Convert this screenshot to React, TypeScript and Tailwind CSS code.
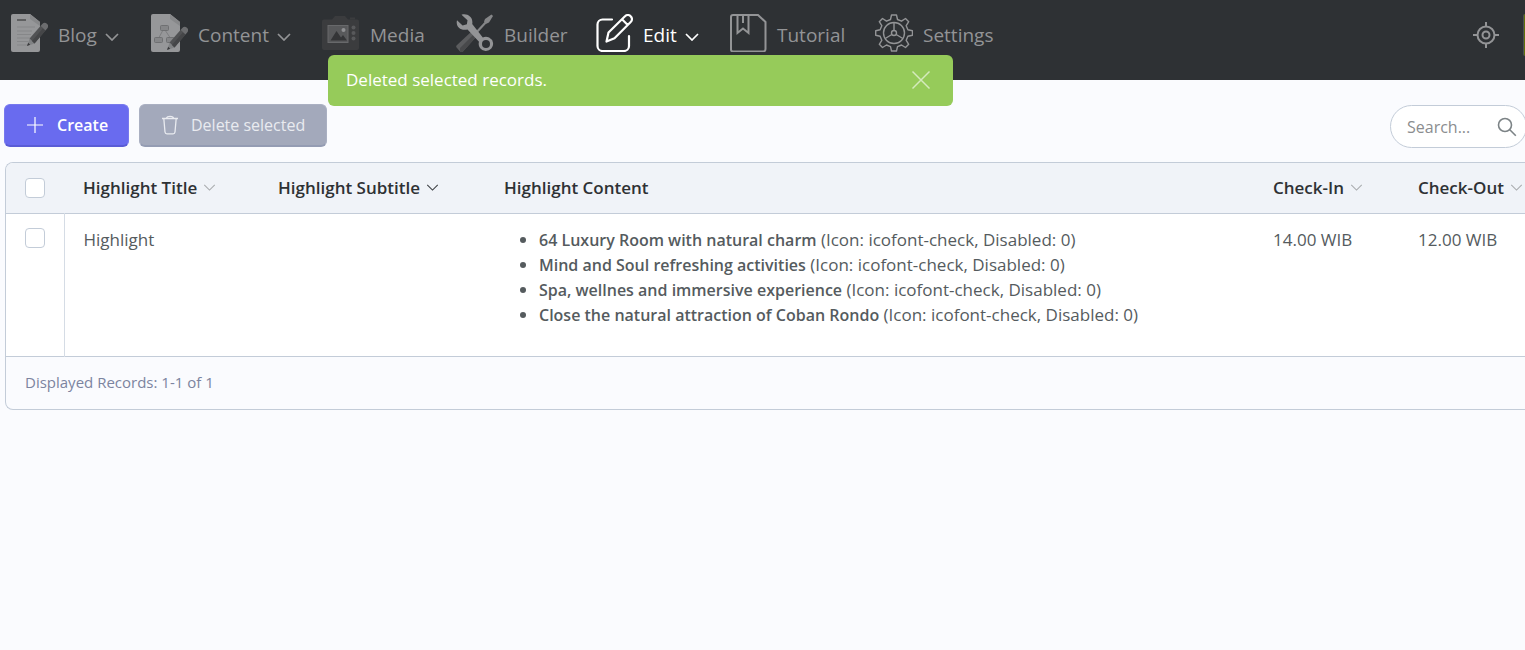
import React from "react";

function Pencil() {
  return (
    <g>
      <path d="M17 32l2.600-7.400 5 5z" fill="#808284" />
      <path d="M17 32l1.200-3.200 2 2z" fill="#38393b" />
      <path d="M19.600 24.600L30.500 12l5 4.400-11 13z" fill="#515254" />
      <path d="M22 27L33 14.200l2.500 2.200-11 13z" fill="#454648" />
      <path d="M30.500 12l1.800-2a3.200 3.200 0 0 1 4.900 4.400l-1.700 2z" fill="#6c6d6f" />
    </g>
  );
}

function Sheet() {
  return (
    <>
      <path d="M3 0h17l10 8v28a2 2 0 0 1-2 2H3a2 2 0 0 1-2-2V2a2 2 0 0 1 2-2z" fill="#969799" />
      <path d="M20 0l10 8v4L20 5z" fill="#87888a" />
    </>
  );
}

const blogIcon = (
  <svg viewBox="0 0 38 38" className="size-[38px] shrink-0" aria-hidden="true">
    <Sheet />
    <path d="M7 6h9" stroke="#515254" strokeWidth="1.6" />
    <path d="M7 13h18M7 17h15M7 20.500h14M7 24h13M7 27.500h11M7 31h11" stroke="#868789" strokeWidth="1.100" />
    <Pencil />
  </svg>
);

const contentIcon = (
  <svg viewBox="0 0 38 38" className="size-[38px] shrink-0" aria-hidden="true">
    <Sheet />
    <path d="M13 16l-4 7.500M15 16l5 7.500" stroke="#7c7d7f" fill="none" />
    <g fill="#858688" stroke="#6f7072">
      <rect x="10.500" y="11.500" width="8" height="5" rx="1" />
      <rect x="4.500" y="23.500" width="8" height="5" rx="1" />
      <rect x="16.500" y="23.500" width="8" height="5" rx="1" />
    </g>
    <g transform="translate(0 4)"><Pencil /></g>
  </svg>
);

const mediaIcon = (
  <svg viewBox="0 0 38 38" className="size-[38px] shrink-0" aria-hidden="true">
    <path d="M2 5.500h8L13 2h10l3 3.500h9a2 2 0 0 1 2 2V34a2 2 0 0 1-2 2H2a2 2 0 0 1-2-2V7.500a2 2 0 0 1 2-2z" fill="#3b3c3e" />
    <path d="M28 4.500h5" stroke="#3b3c3e" strokeWidth="2" />
    <rect x="6" y="11.500" width="20" height="17" fill="#58595b" stroke="#68696b" />
    <path d="M8.500 26.500l6-9.500 4.500 6.500 2-2.500 4 5.500z" fill="#343537" />
    <circle cx="21.500" cy="16" r="2" fill="#909193" />
    <g fill="#58595b"><circle cx="31.500" cy="13.500" r="2" /><circle cx="31.500" cy="19" r="2" /><circle cx="31.500" cy="24.500" r="2" /></g>
  </svg>
);

const builderIcon = (
  <svg viewBox="0 0 38 38" className="size-[38px] shrink-0" aria-hidden="true">
    <path d="M19 20L31 7" stroke="#858688" strokeWidth="2.200" />
    <path d="M28 7.500l1-2.500 6.500-4.500 1.500 1.500-4 6.500-2.700 1.300z" fill="#858688" />
    <path d="M1 31l14.500-13.500 5 5L7 37.500a2 2 0 0 1-3 0l-3-3.500a2 2 0 0 1 0-3z" fill="#5b5c5e" />
    <path d="M4 34l14-14 2.500 2.500L7 37.500a2 2 0 0 1-3 0z" fill="#48494b" />
    <path d="M5.500.800C11-1.200 17.600 3 16.200 10l10.600 13.400a7.200 7.200 0 1 1-3.800 4.400L11.500 15.400C5 17.400-.700 12.500 1 6.200l5.600 5.200 4.300-1.200.600-4z" fill="#939496" />
    <circle cx="30" cy="30" r="4" fill="#2e3134" />
  </svg>
);

const editIcon = (
  <svg viewBox="0 0 38 38" className="size-[38px] shrink-0" fill="none" stroke="currentColor" strokeWidth="2.200" strokeLinejoin="round" strokeLinecap="round" aria-hidden="true">
    <path d="M17 5.500H7.500A5 5 0 0 0 2.500 10.500V32a5 5 0 0 0 5 5H29a5 5 0 0 0 5-5V22" />
    <path d="M11.500 27.500l2-9L30 2.300a3.800 3.800 0 0 1 5.700 0 3.800 3.800 0 0 1 0 5.700L19.500 24.200zM27 5.300l5.700 5.700" />
  </svg>
);

const tutorialIcon = (
  <svg viewBox="0 0 38 38" className="size-[38px] shrink-0" fill="none" stroke="currentColor" strokeWidth="2" aria-hidden="true">
    <path d="M4 1h25l7.500 7v27A2.500 2.500 0 0 1 34 37.500H4A2 2 0 0 1 2 35.500V3a2 2 0 0 1 2-2z" />
    <path d="M8.500 1v18l5.500-4.500 5.500 4.500V1M14 1v8" />
  </svg>
);

const settingsIcon = (
  <svg viewBox="0 0 38 38" className="size-[38px] shrink-0" fill="none" stroke="currentColor" strokeWidth="1.400" strokeLinejoin="round" aria-hidden="true">
    <path d="M16.500 1h5l1 4.500 4 1.700 4-2.700 3.200 3.200-2.500 4 1.700 4 4.600 1v4.600l-4.600 1-1.700 4 2.500 4-3.200 3.200-4-2.500-4 1.700-1 4.300h-5l-1-4.300-4-1.700-4 2.500-3.200-3.200 2.500-4-1.700-4L.700 21.300v-4.600l4.400-1 1.700-4-2.500-4 3.200-3.200 4 2.700 4-1.700z" />
    <circle cx="19" cy="19" r="10.500" />
    <circle cx="19" cy="19" r="2.500" />
    <path d="M19 8.500v8M16.800 20.500l-6.600 4M21.200 20.500l6.600 4" />
  </svg>
);

function Chevron({ className }: { className: string }) {
  return (
    <svg viewBox="0 0 14 8" className={className} fill="none" stroke="currentColor" aria-hidden="true">
      <path d="M1 1l6 6 6-6" />
    </svg>
  );
}

const navItems = [
  { label: "Blog", icon: blogIcon, menu: true, width: "w-[140px]" },
  { label: "Content", icon: contentIcon, menu: true, width: "w-[172px]" },
  { label: "Media", icon: mediaIcon, menu: false, width: "w-[134px]" },
  { label: "Builder", icon: builderIcon, menu: false, width: "w-[139px]" },
  { label: "Edit", icon: editIcon, menu: true, width: "w-[134px]" },
  { label: "Tutorial", icon: tutorialIcon, menu: false, width: "w-[146px]" },
  { label: "Settings", icon: settingsIcon, menu: false, width: "w-[130px]" },
];

const columns = [
  { label: "Highlight Title", sort: "text-[#a9abae]", width: "w-[195px]" },
  { label: "Highlight Subtitle", sort: "text-[#3c3f43]", width: "w-[226px]" },
  { label: "Highlight Content", sort: "", width: "" },
  { label: "Check-In", sort: "text-[#a9abae]", width: "w-[145px]" },
  { label: "Check-Out", sort: "text-[#a9abae]", width: "w-[126px]" },
];

const highlights = [
  "64 Luxury Room with natural charm",
  "Mind and Soul refreshing activities",
  "Spa, wellnes and immersive experience",
  "Close the natural attraction of Coban Rondo",
];

const checkbox =
  "block size-5 appearance-none rounded-[4px] border border-[#c3ccd8] bg-white checked:bg-[#696bef]";

export default function App() {
  return (
    <div className="relative min-h-screen overflow-x-hidden bg-[#fafbfe] font-['Open_Sans','Noto_Sans',sans-serif] text-base text-[#555b5e]">
      <header className="flex h-20 items-start justify-between bg-[#2e3134] text-[#939496]">
        <nav className="flex pt-3.5 pl-2.5" aria-label="Main">
          {navItems.map((item) => (
            <a
              key={item.label}
              href="#"
              className={`flex shrink-0 items-center whitespace-nowrap ${item.width} ${item.label === "Edit" ? "text-white" : ""}`}
            >
              {item.icon}
              <span className="mt-1 ml-2.5 text-[19px] leading-6">{item.label}</span>
              {item.menu && <Chevron className="mt-2 ml-2 h-2 w-3.5 stroke-[1.700]" />}
            </a>
          ))}
        </nav>
        <div className="flex items-start pt-3.5">
          <button type="button" aria-label="Locate" className="mt-2">
            <svg viewBox="0 0 26 26" className="size-[26px]" fill="none" stroke="currentColor" strokeWidth="2" aria-hidden="true">
              <circle cx="13" cy="13" r="8.500" />
              <circle cx="13" cy="13" r="3.500" />
              <path d="M13 0v5M13 21v5M0 13h5M21 13h5" />
            </svg>
          </button>
          <span className="ml-6 h-[42px] w-0.5 rounded-l-sm border-l border-[#4c5052] bg-[#5f7009]" />
        </div>
      </header>

      <div role="status" className="absolute top-[55px] left-[328px] flex h-[51px] w-[625px] items-center justify-between rounded-md bg-[#96cb5a] pr-[22px] pb-0.5 pl-[18px] text-[17px] text-white">
        <span>Deleted selected records.</span>
        <button type="button" aria-label="Close" className="text-[#d5eabd]">
          <svg viewBox="0 0 20 20" className="size-5" fill="none" stroke="currentColor" strokeWidth="1.500" aria-hidden="true">
            <path d="M1.500 1.500l17 17M18.500 1.500l-17 17" />
          </svg>
        </button>
      </div>

      <main className="pt-6">
        <div className="flex items-start justify-between pl-1">
          <div className="flex gap-2.5">
            <button type="button" className="flex h-[43px] w-[125px] items-center rounded-md border border-b-2 border-[#5a5cd6] border-x-[#7779ee] border-t-[#7779ee] bg-[#696bef] pl-[22px] font-semibold text-white">
              <svg viewBox="0 0 16 16" className="size-4" fill="none" stroke="currentColor" strokeWidth="1.200" aria-hidden="true">
                <path d="M8 0v16M0 8h16" />
              </svg>
              <span className="ml-3.5">Create</span>
            </button>
            <button type="button" disabled className="flex h-[43px] w-[188px] items-center rounded-md border border-b-2 border-[#949cb3] border-x-[#aab0c2] border-t-[#aab0c2] bg-[#a3a9bb] pl-[21px] text-[#e9ebf0]">
              <svg viewBox="0 0 18 20" className="h-5 w-[18px]" fill="none" stroke="currentColor" strokeWidth="1.300" aria-hidden="true">
                <path d="M1 3.500h16M5.500 3.500C5.500.700 12.500.700 12.500 3.500M2.800 3.500l1.200 13.500a2 2 0 0 0 2 1.800h6a2 2 0 0 0 2-1.800l1.200-13.500" />
              </svg>
              <span className="ml-3 whitespace-nowrap">Delete selected</span>
            </button>
          </div>
          <label className="mt-px -mr-0.5 flex h-[43px] w-[137px] shrink-0 items-center rounded-full border border-[#c3ccd8] bg-white pr-[9px] pl-4">
            <input type="search" aria-label="Search" placeholder="Search..." className="w-20 min-w-0 flex-1 bg-transparent outline-none placeholder:text-[#8b8d8f]" />
            <svg viewBox="0 0 20 20" className="size-5 text-[#7c8386]" fill="none" stroke="currentColor" strokeWidth="1.600" aria-hidden="true">
              <circle cx="8" cy="8" r="6.500" />
              <path d="M12.800 12.800l6 6" />
            </svg>
          </label>
        </div>

        <section className="mt-3.5 ml-[5px] overflow-hidden rounded-l-lg border border-r-0 border-[#c3ccd8]">
          <table className="w-full table-fixed border-collapse text-left text-[17px]">
            <thead className="bg-[#f0f3f8] text-[#2e3134]">
              <tr className="h-[50px] border-b border-[#c3ccd8]">
                <th className="w-[58px] pl-[19px]">
                  <input type="checkbox" aria-label="Select all records" className={checkbox} />
                </th>
                {columns.map((column) => (
                  <th key={column.label} className={`pl-[19px] font-semibold ${column.width}`}>
                    <span className="flex items-center whitespace-nowrap">
                      {column.label}
                      {column.sort && (
                        <button type="button" aria-label={`Sort by ${column.label}`} className={`ml-1.5 ${column.sort}`}>
                          <Chevron className="h-[7px] w-[13px] stroke-[1.200]" />
                        </button>
                      )}
                    </span>
                  </th>
                ))}
              </tr>
            </thead>
            <tbody className="bg-white">
              <tr className="h-[143px] border-b border-[#c3ccd8] align-top leading-[25px]">
                <td className="border-r border-[#d5dce5] pt-3.5 pl-[19px]">
                  <input type="checkbox" aria-label="Select Highlight" className={checkbox} />
                </td>
                <td className="pt-[13px] pl-[19px]">Highlight</td>
                <td />
                <td className="pt-[13px] pl-[19px]">
                  <ul className="list-disc pl-[35px]">
                    {highlights.map((text) => (
                      <li key={text}>
                        <strong className="text-[16px] leading-5 font-semibold">{text}</strong> (Icon: icofont-check, Disabled: 0)
                      </li>
                    ))}
                  </ul>
                </td>
                <td className="pt-[13px] pl-[19px]">14.00 WIB</td>
                <td className="pt-[13px] pl-[19px]">12.00 WIB</td>
              </tr>
            </tbody>
          </table>
          <footer className="flex h-[52px] items-center pl-[19px] text-[15px] text-[#7c84a0]">
            Displayed Records: 1-1 of 1
          </footer>
        </section>
      </main>
    </div>
  );
}
